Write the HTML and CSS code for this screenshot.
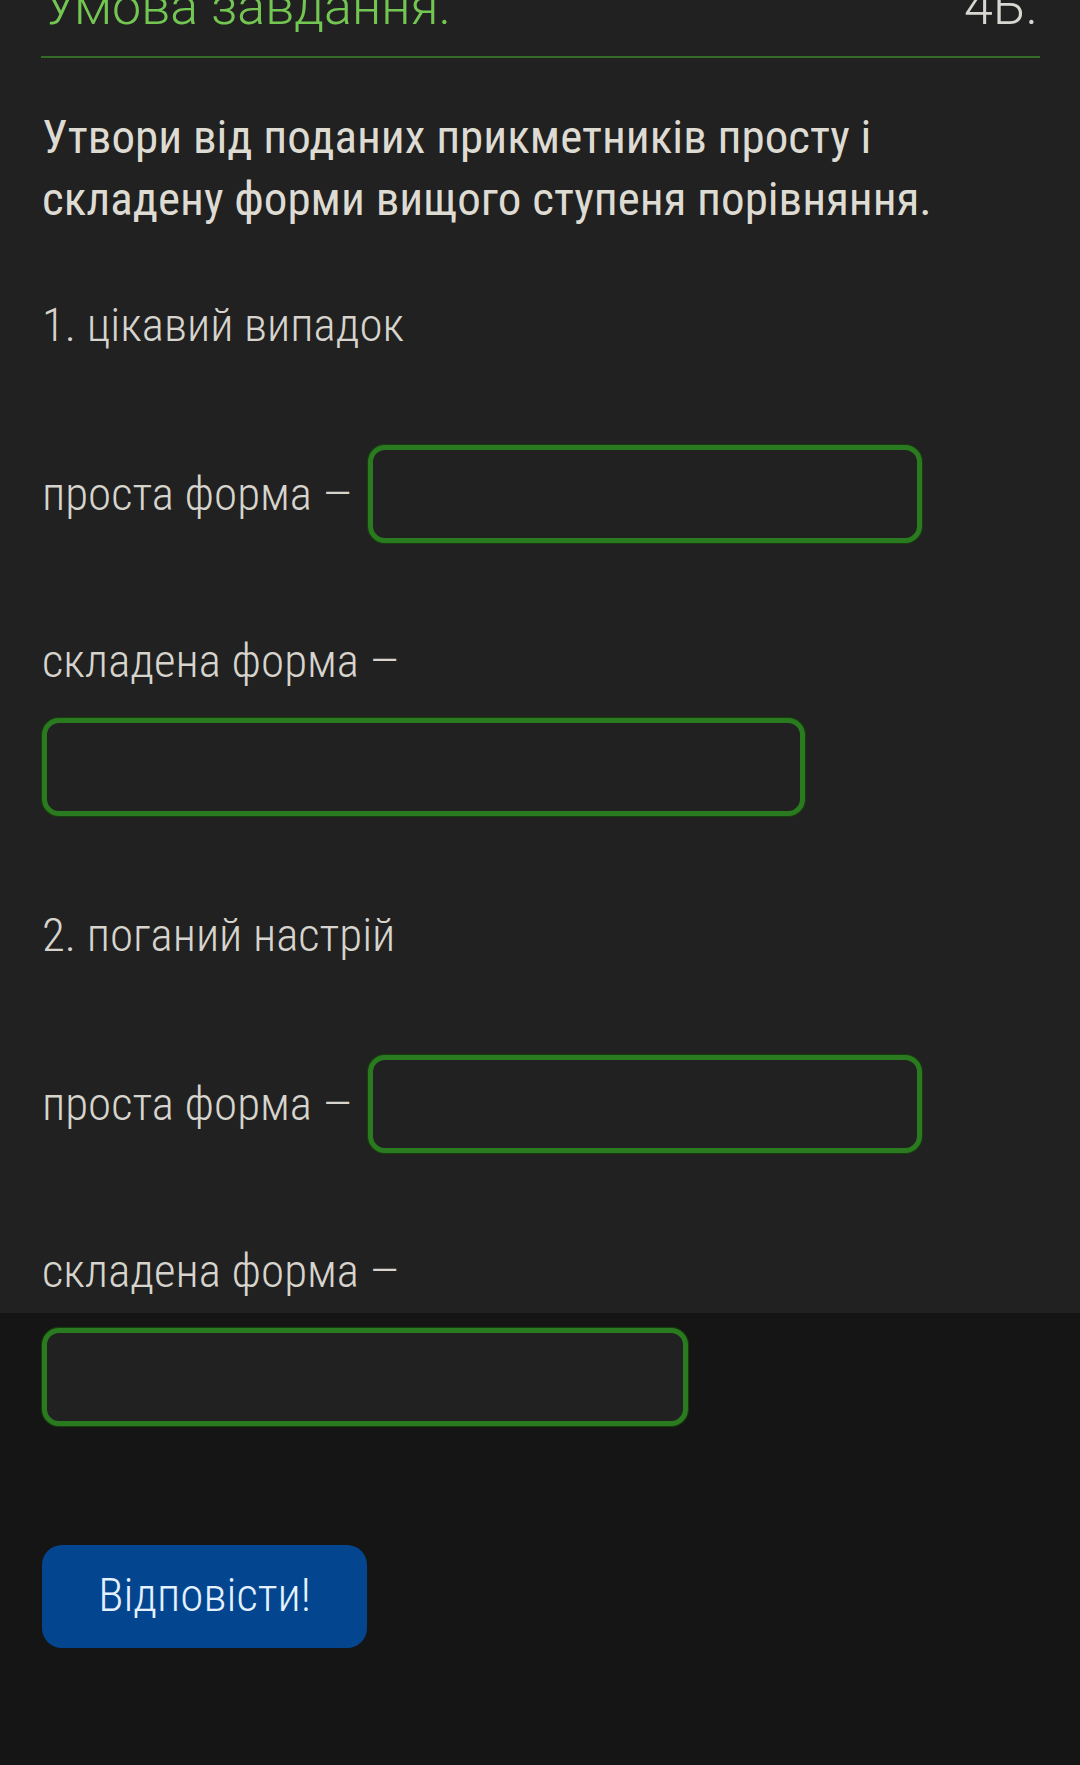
FILE: index.html
```html
<!DOCTYPE html>
<html lang="uk">
<head>
<meta charset="utf-8">
<title>Умова завдання</title>
<link rel="stylesheet" href="styles.css">
</head>
<body>
<main class="page">
  <section class="card">
    <header class="task-head">
      <span class="task-title">Умова завдання.</span>
      <span class="task-points">4Б.</span>
    </header>
    <p class="task-text">Утвори від поданих прикметників просту і складену форми вищого ступеня порівняння.</p>

    <div class="item">
      <p class="item-title">1. цікавий випадок</p>
      <div class="row">
        <span class="label">проста форма <span class="dash">–</span></span>
        <span class="field field--s"></span>
      </div>
      <p class="label label--block">складена форма <span class="dash">–</span></p>
      <span class="field field--l"></span>
    </div>

    <div class="item item--next">
      <p class="item-title">2. поганий настрій</p>
      <div class="row">
        <span class="label">проста форма <span class="dash">–</span></span>
        <span class="field field--s"></span>
      </div>
      <p class="label label--block">складена форма <span class="dash">–</span></p>
      <span class="field field--m"></span>
    </div>
  </section>

  <div class="actions">
    <button class="btn-answer" type="button">Відповісти!</button>
  </div>
</main>
</body>
</html>
```

FILE: styles.css
```css
html, body {
  margin: 0;
  padding: 0;
}

body {
  background: #151515;
  font-family: "Roboto Condensed", Roboto, "Noto Sans", sans-serif;
  font-stretch: condensed;
  color: #dcd9d1;
  min-height: 1765px;
}

.page {
  display: block;
}

.card {
  background: #212121;
  height: 1313px;
  box-sizing: border-box;
  padding: 0 40px 0 42px;
  display: flow-root;
}

.task-head {
  margin-top: -24px;
  margin-left: -1px;
  display: flex;
  justify-content: space-between;
  align-items: baseline;
  font-family: Roboto, "Noto Sans", sans-serif;
  font-stretch: normal;
  font-weight: 300;
  font-size: 52px;
  line-height: 62px;
  padding-bottom: 18px;
  border-bottom: 2px solid #356b26;
}

.task-title {
  color: #74c653;
  padding-left: 3px;
}

.task-points {
  color: #d8d6d0;
  padding-right: 2px;
}

.task-text {
  margin: 48px 0 0;
  font-size: 47px;
  line-height: 62px;
  font-weight: 400;
  color: #dedbd3;
  max-width: 900px;
}

.item {
  margin-top: 64px;
}

.item--next {
  margin-top: 88px;
}

.item-title,
.label {
  margin: 0;
  font-size: 47px;
  line-height: 62px;
  font-weight: 300;
  color: #d6d4cd;
}

.dash {
  font-family: Roboto, "Noto Sans", sans-serif;
  font-stretch: normal;
}

.row {
  margin-top: 89px;
  display: flex;
  align-items: center;
  gap: 15px;
}

.label--block {
  margin-top: 87px;
}

.field {
  display: block;
  box-sizing: border-box;
  height: 98px;
  border: 5px solid #2a7b1f;
  border-radius: 17px;
  background: #212121;
  box-shadow: 0 0 1px 1px #18400f;
}

.label--block + .field {
  margin-top: 26px;
}

.field--s { width: 554px; }
.field--l { width: 763px; }
.field--m { width: 646px; }

.actions {
  padding: 232px 42px 0;
}

.btn-answer {
  width: 325px;
  height: 103px;
  border: 0;
  border-radius: 20px;
  background: #03468f;
  color: #e4f1ff;
  font-family: "Roboto Condensed", Roboto, sans-serif;
  font-stretch: condensed;
  font-weight: 300;
  font-size: 47px;
  line-height: 1;
  padding: 0 0 4px;
  cursor: pointer;
}
```
